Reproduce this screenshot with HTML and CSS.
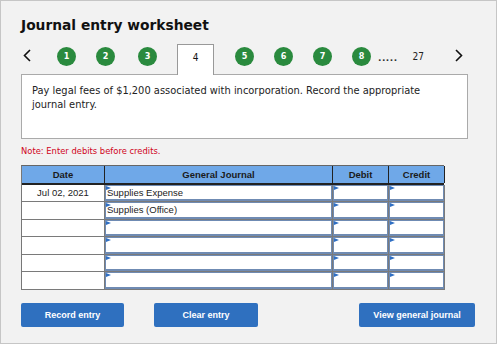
FILE: index.html
```html
<!DOCTYPE html>
<html lang="en">
<head>
<meta charset="utf-8">
<title>Journal entry worksheet</title>
<link rel="stylesheet" href="styles.css">
</head>
<body>
<div class="frame">
  <h1 class="title">Journal entry worksheet</h1>
  <nav class="steps">
    <span class="chev prev"><svg width="8" height="13" viewBox="0 0 8 13"><polyline points="7,1 1.5,6.5 7,12" fill="none" stroke="#111" stroke-width="1.6"/></svg></span>
    <span class="step s1">1</span>
    <span class="step s2">2</span>
    <span class="step s3">3</span>
    <span class="tab">4</span>
    <span class="step s5">5</span>
    <span class="step s6">6</span>
    <span class="step s7">7</span>
    <span class="step s8">8</span>
    <span class="dots">.....</span>
    <span class="last">27</span>
    <span class="chev next"><svg width="8" height="13" viewBox="0 0 8 13"><polyline points="1,1 6.5,6.5 1,12" fill="none" stroke="#111" stroke-width="1.6"/></svg></span>
  </nav>
  <div class="question">Pay legal fees of $1,200 associated with incorporation. Record the appropriate journal entry.</div>
  <p class="note">Note: Enter debits before credits.</p>
  <div class="journal">
    <div class="row head">
      <div class="cell">Date</div>
      <div class="cell">General Journal</div>
      <div class="cell">Debit</div>
      <div class="cell">Credit</div>
    </div>
    <div class="row">
      <div class="cell date">Jul 02, 2021</div>
      <div class="cell"><div class="field">Supplies Expense</div></div>
      <div class="cell"><div class="field"></div></div>
      <div class="cell"><div class="field"></div></div>
    </div>
    <div class="row">
      <div class="cell date"></div>
      <div class="cell"><div class="field">Supplies (Office)</div></div>
      <div class="cell"><div class="field"></div></div>
      <div class="cell"><div class="field"></div></div>
    </div>
    <div class="row">
      <div class="cell date"></div>
      <div class="cell"><div class="field"></div></div>
      <div class="cell"><div class="field"></div></div>
      <div class="cell"><div class="field"></div></div>
    </div>
    <div class="row">
      <div class="cell date"></div>
      <div class="cell"><div class="field"></div></div>
      <div class="cell"><div class="field"></div></div>
      <div class="cell"><div class="field"></div></div>
    </div>
    <div class="row">
      <div class="cell date"></div>
      <div class="cell"><div class="field"></div></div>
      <div class="cell"><div class="field"></div></div>
      <div class="cell"><div class="field"></div></div>
    </div>
    <div class="row">
      <div class="cell date"></div>
      <div class="cell"><div class="field"></div></div>
      <div class="cell"><div class="field"></div></div>
      <div class="cell"><div class="field"></div></div>
    </div>
  </div>
  <div class="actions">
    <button class="btn record">Record entry</button>
    <button class="btn clear">Clear entry</button>
    <button class="btn view">View general journal</button>
  </div>
</div>
</body>
</html>
```
FILE: styles.css
```css
* { box-sizing: border-box; }
html, body { margin: 0; padding: 0; background: #fff; }
body { font-family: "Liberation Sans", Arial, sans-serif; }

.frame {
  width: 497px;
  height: 344px;
  border: 1px solid #c6c6c6;
  background: #f2f2f2;
  padding: 16px 0 0 20px;
}

.title {
  margin: 0;
  font-family: "DejaVu Sans", sans-serif;
  font-weight: bold;
  font-size: 13.8px;
  line-height: 17px;
  color: #111;
}

.steps {
  display: flex;
  align-items: flex-start;
  height: 31px;
  margin-top: 10px;
  margin-bottom: -1px;
  position: relative;
  z-index: 1;
}

.chev { display: block; margin-top: 5px; }
.chev svg { display: block; }
.prev { margin-left: 2px; }
.next { margin-left: 31px; }

.step {
  width: 19px;
  height: 19px;
  margin-top: 3px;
  border-radius: 50%;
  background: #2a8a3e;
  color: #fff;
  font-family: "DejaVu Sans Condensed", "DejaVu Sans", sans-serif;
  font-stretch: condensed;
  font-weight: bold;
  font-size: 9px;
  line-height: 19px;
  text-align: center;
  margin-left: 20px;
}
.s1 { margin-left: 26px; }
.s3 { margin-left: 23px; }
.s5 { margin-left: 21px; }

.tab {
  width: 37px;
  height: 31px;
  margin-left: 20px;
  border: 1px solid #999;
  border-bottom: 0;
  background: #fff;
  font-family: "DejaVu Sans Condensed", "DejaVu Sans", sans-serif;
  font-size: 10px;
  line-height: 12px;
  padding-top: 7px;
  text-align: center;
  color: #111;
}

.dots {
  margin-left: 7px;
  margin-top: 8px;
  font-family: "DejaVu Sans", sans-serif;
  font-weight: bold;
  font-size: 9px;
  letter-spacing: 0.5px;
  color: #333;
  line-height: 12px;
}

.last {
  margin-left: 15px;
  margin-top: 7px;
  font-family: "DejaVu Sans Condensed", "DejaVu Sans", sans-serif;
  font-size: 10px;
  line-height: 12px;
  color: #222;
}

.question {
  width: 447px;
  height: 65px;
  background: #fff;
  border: 1px solid #aaa;
  padding: 9px 16px 9px 10px;
  font-family: "DejaVu Sans", sans-serif;
  font-size: 9.9px;
  line-height: 14px;
  color: #222;
}

.note {
  margin: 6px 0 0;
  font-family: "DejaVu Sans", sans-serif;
  font-size: 8.4px;
  line-height: 12px;
  color: #d0021b;
}

.journal {
  width: 423px;
  margin-top: 8px;
  border-top: 1px solid #666;
  border-left: 1px solid #777;
  font-size: 9.5px;
  color: #222;
}

.row {
  display: grid;
  grid-template-columns: 83px 228px 56px 56px;
  height: 17px;
}
.row:nth-child(odd) { height: 18px; }

.row.head {
  height: 19px;
  background: #6fa8e8;
  border-bottom: 2px solid #222;
}
.head .cell {
  border-right: 1px solid #222;
  font-weight: bold;
  text-align: center;
  line-height: 17px;
  color: #1b1b1b;
}

.cell {
  border-right: 1px solid #7a7a7a;
  border-bottom: 1px solid #7a7a7a;
  min-width: 0;
}
.head .cell { border-bottom: 0; }

.cell.date {
  background: #fff;
  text-align: center;
  line-height: 16px;
}

.field {
  position: relative;
  height: 100%;
  background: #fff;
  border: 1px solid #6f8bb3;
  border-bottom-width: 2px;
  line-height: 13px;
  padding-left: 1px;
  white-space: nowrap;
  overflow: hidden;
}
.field::before {
  content: "";
  position: absolute;
  left: 0;
  top: 0;
  border-top: 2px solid transparent;
  border-bottom: 2px solid transparent;
  border-left: 5px solid #2f6fc4;
}

.actions {
  display: flex;
  margin-top: 13px;
}

.btn {
  height: 24px;
  border: 0;
  border-radius: 2px;
  background: #2f70bf;
  color: #fff;
  font-family: "Liberation Sans", Arial, sans-serif;
  font-weight: bold;
  font-size: 9px;
  padding: 0;
  cursor: pointer;
}
.record { width: 103px; }
.clear { width: 104px; margin-left: 30px; }
.view { width: 116px; margin-left: 101px; }
```
